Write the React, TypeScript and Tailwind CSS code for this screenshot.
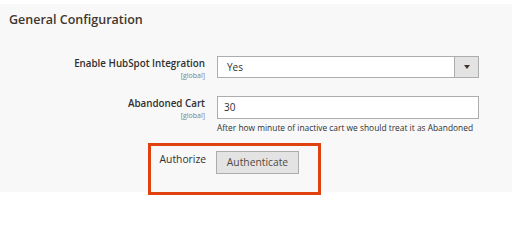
export default function App() {
  return (
    <div className="relative w-[512px] h-[233px] bg-white pt-[4px] text-[#303030]" style={{ fontFamily: '"Open Sans", "Liberation Sans", sans-serif' }}>
      <div className="h-[188px] bg-[#f8f8f8]">
        <h2 className="pl-[9px] pt-[7px] text-[12.5px] leading-[18px] font-semibold text-[#41362f]">General Configuration</h2>

        <div className="mt-[28px] flex items-start">
          <div className="w-[205px] text-right">
            <div className="text-[9.8px] leading-[14px] font-semibold">Enable HubSpot Integration</div>
            <div className="text-[7px] leading-[9px] text-[#808080]">[global]</div>
          </div>
          <div className="ml-[12px] -mt-[1px] flex h-[22px] w-[262px] border border-[#adadad] bg-white">
            <div className="flex-1 pl-[9px] text-[10px] leading-[20px]">Yes</div>
            <div className="flex w-[24px] items-center justify-center border-l border-[#adadad] bg-[#e3e3e3]">
              <svg width="6" height="4" viewBox="0 0 6 4"><path d="M0 0h6L3 4z" fill="#41362f" /></svg>
            </div>
          </div>
        </div>

        <div className="mt-[17px] flex items-start">
          <div className="w-[205px] text-right">
            <div className="text-[9.8px] leading-[14px] font-semibold">Abandoned Cart</div>
            <div className="text-[7px] leading-[9px] text-[#808080]">[global]</div>
          </div>
          <div className="ml-[12px] -mt-[1px]">
            <div className="h-[23px] w-[262px] border border-[#adadad] bg-white pl-[6px] text-[10px] leading-[21px]">30</div>
            <div className="mt-[3px] text-[8.4px] leading-[12px]">After how minute of inactive cart we should treat it as Abandoned</div>
          </div>
        </div>

        <div className="mt-[16px] flex items-start">
          <div className="w-[206px] pt-[2px] text-right text-[10.3px] leading-[14px]">Authorize</div>
          <button className="ml-[10px] mt-[1px] h-[23px] w-[83px] border border-[#adadad] bg-[#e3e3e3] text-[10.3px] leading-[21px] text-[#514943]">Authenticate</button>
        </div>
      </div>

      <div className="absolute left-[148px] top-[143px] h-[52px] w-[173px] border-[3px] border-[#e0420f]" />
    </div>
  )
}
